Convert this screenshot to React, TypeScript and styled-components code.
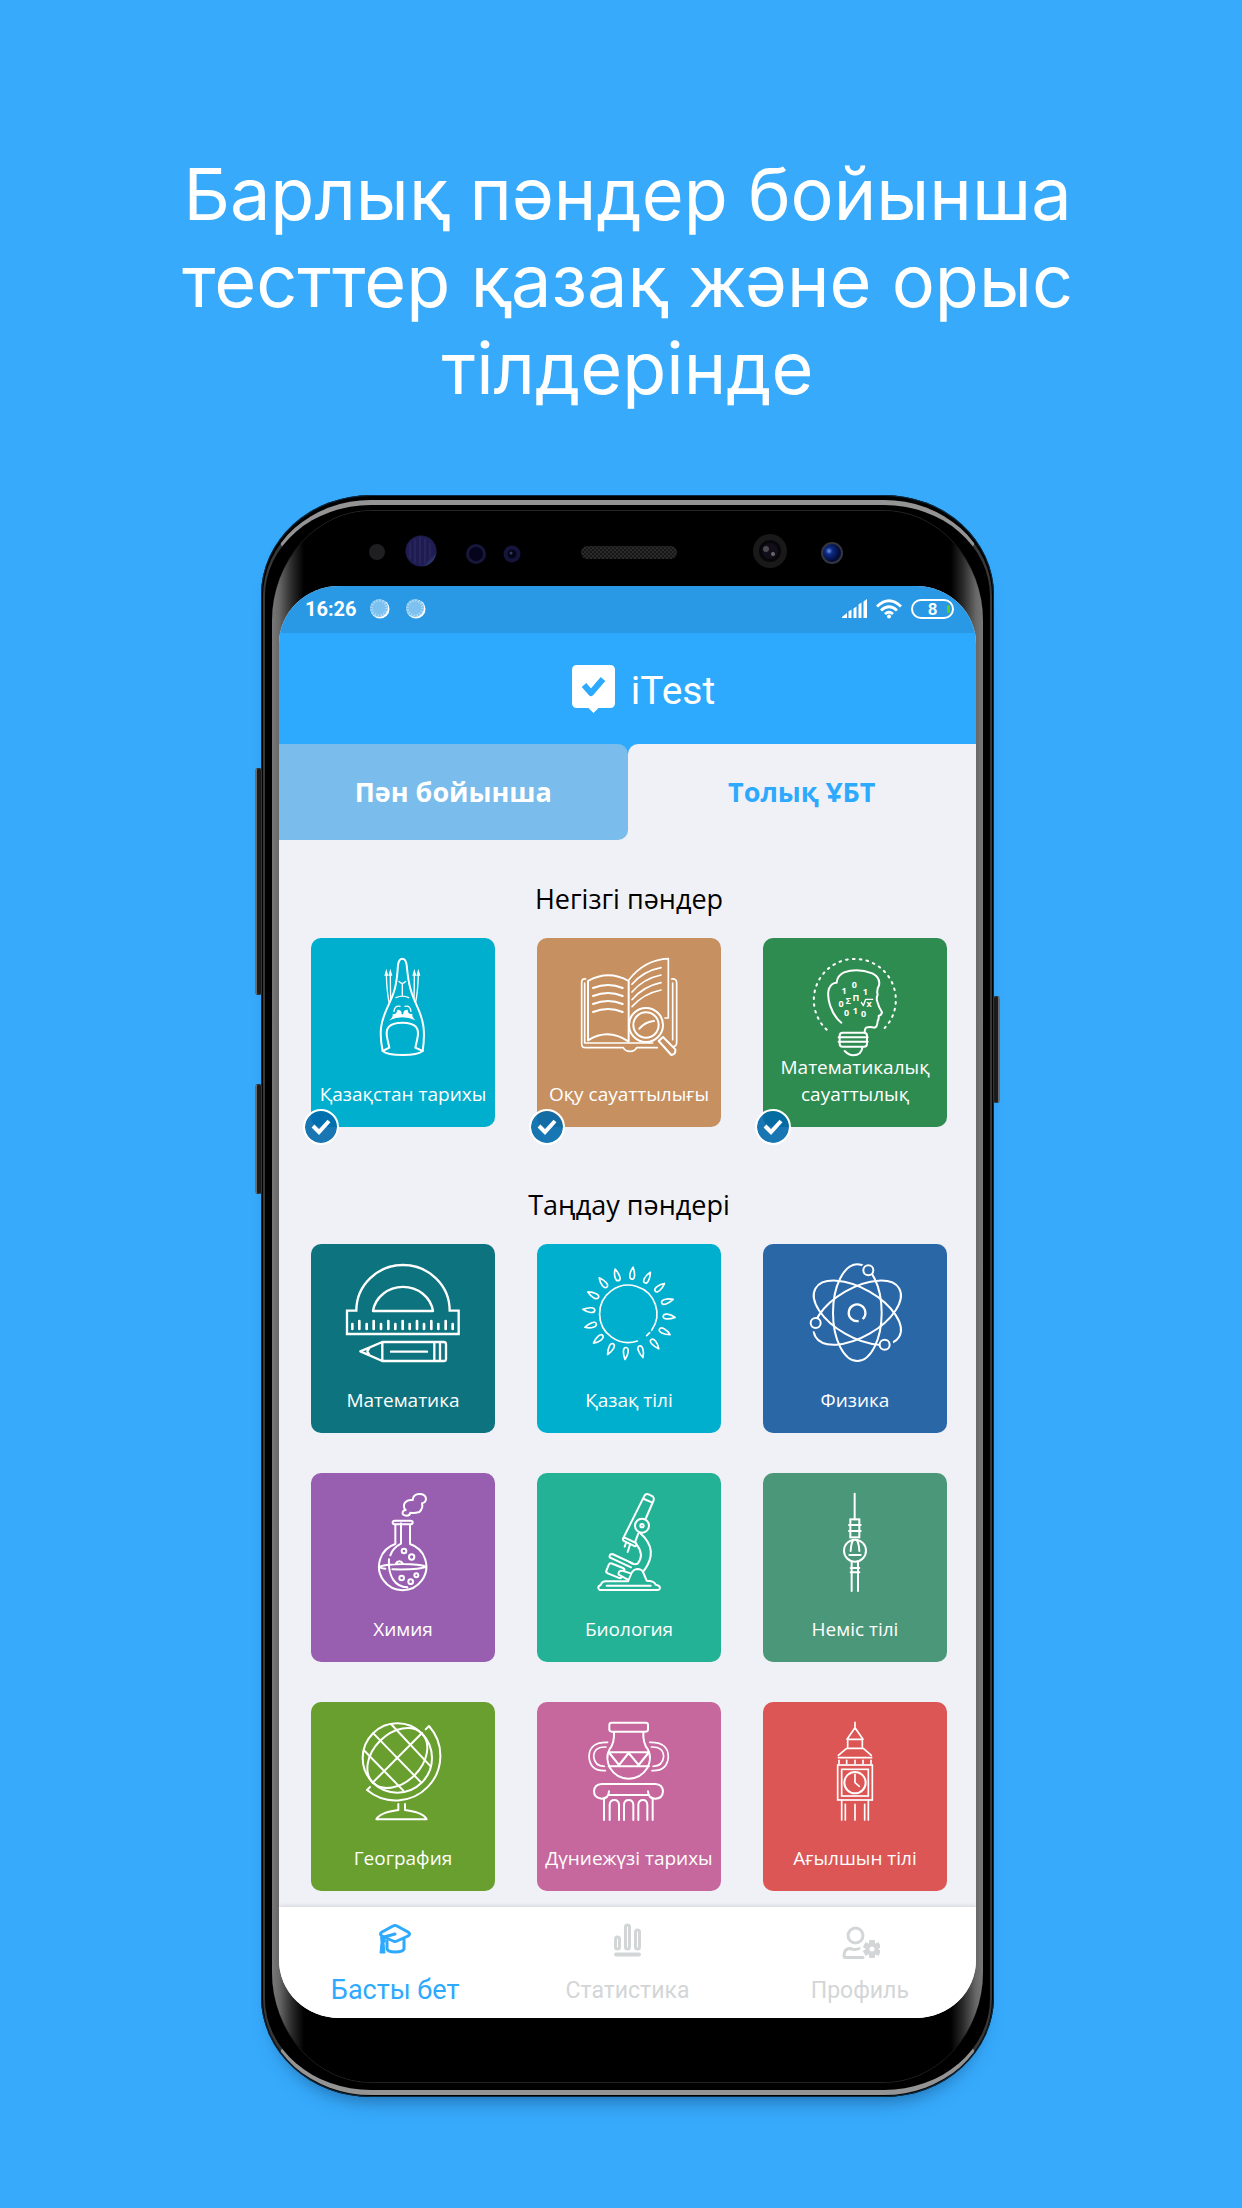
import React, { useState } from "react";
import styled, { createGlobalStyle } from "styled-components";

const GlobalStyle = createGlobalStyle`
  * { box-sizing: border-box; }
  body { margin: 0; background: #37aafc; }
  button { border: 0; padding: 0; background: none; font: inherit; color: inherit; cursor: pointer; }
  h1, h2, p { margin: 0; font-weight: 400; }
`;

const sans = `"Open Sans", "Noto Sans", sans-serif`;
const roboto = `Roboto, "Noto Sans", sans-serif`;

const Page = styled.main`
  min-height: 100vh;
  padding: 150px 0 111px 13px;
  display: flex;
  flex-direction: column;
  align-items: center;
  gap: 84px;
  background: #37aafc;
`;

const Headline = styled.p`
  max-width: 960px;
  color: #fff;
  font-family: Inter, "Noto Sans", sans-serif;
  font-size: 72px;
  line-height: 87px;
  text-align: center;
`;

/* ---------- phone body ---------- */

const Phone = styled.div`
  position: relative;
  width: min(733px, 100%);
  padding: 16px 11px 15px;
  background: #000;
  border-radius: 110px / 100px;
  box-shadow: 0 16px 20px -14px rgba(10, 50, 90, 0.6), inset 0 0 0 1px #0c2a40;

  &::before {
    content: "";
    position: absolute;
    inset: 5px 2px 2px;
    border: solid;
    border-width: 5px 2px;
    border-color: #949494 #383838;
    border-radius: 108px / 96px;
  }
`;

const SideKey = styled.span<{ $side: "left" | "right"; $top: number; $length: number }>`
  position: absolute;
  ${(p) => p.$side}: -6px;
  top: ${(p) => p.$top}px;
  width: 7px;
  height: ${(p) => p.$length}px;
  background: #1b1b1b;
  border: 1px solid #333;
  border-${(p) => p.$side}: 2px solid #6a6a6a;
  border-radius: 3px;
`;

const Glass = styled.div`
  position: relative;
  padding: 0 7px 64px;
  border-radius: 100px / 110px;
  background: linear-gradient(
    90deg,
    #787878 0,
    #686868 7px,
    #2a2a2a 20px,
    #000 32px,
    #000 calc(100% - 32px),
    #2a2a2a calc(100% - 20px),
    #686868 calc(100% - 7px),
    #787878 100%
  );
  box-shadow: 0 -1px 0 #262626, 0 1px 0 #222;
`;

const Sensors = styled.svg`
  display: block;
  width: 100%;
  height: 75px;
`;

const Screen = styled.div`
  display: flex;
  flex-direction: column;
  overflow: hidden;
  border-radius: 60px / 58px;
  background: #f0f1f6;
`;

/* ---------- app chrome ---------- */

const StatusBar = styled.div`
  display: flex;
  align-items: center;
  height: 47px;
  padding: 0 22px 1px 26px;
  background: #2999e6;
  color: #fff;
  font-family: ${roboto};
`;

const Clock = styled.time`
  margin-right: 13px;
  font-size: 20px;
  font-weight: 700;
  line-height: 24px;
`;

const Notices = styled.div`
  display: flex;
  gap: 16px;
  margin-right: auto;
`;

const Indicators = styled.div`
  display: flex;
  align-items: center;
  gap: 9px;
`;

const Battery = styled.span`
  display: flex;
  align-items: center;
  justify-content: center;
  position: relative;
  width: 43px;
  height: 20px;
  border: 2px solid #fff;
  border-radius: 10px;
  font-size: 17px;
  font-weight: 600;
  line-height: 17px;

  &::after {
    content: "";
    position: absolute;
    right: 2px;
    width: 3px;
    height: 8px;
    border-radius: 2px;
    background: #58cf1c;
  }
`;

const Header = styled.header`
  display: flex;
  align-items: center;
  justify-content: center;
  gap: 16px;
  height: 111px;
  padding-left: 32px;
  background: #2da9fe;
  color: #fff;
`;

const Brand = styled.h1`
  padding-top: 5px;
  font-family: ${roboto};
  font-size: 39px;
  line-height: 48px;
`;

const Tabs = styled.div`
  display: grid;
  grid-template-columns: 1fr 1fr;
  background: linear-gradient(#2da9fe 50%, #f0f1f6 50%);
`;

const Tab = styled.button<{ $current: boolean }>`
  height: 96px;
  border-radius: ${(p) => (p.$current ? "10px 0 0 0" : "0 10px 10px 0")};
  background: ${(p) => (p.$current ? "#f0f1f6" : "#7abcec")};
  color: ${(p) => (p.$current ? "#2da9fe" : "#fff")};
  font-family: ${sans};
  font-size: 27px;
  font-weight: 700;
  line-height: 38px;
`;

/* ---------- subjects ---------- */

const Content = styled.div`
  display: flex;
  flex-direction: column;
  gap: 59px;
  padding: 40px 29px 16px 32px;
`;

const SectionTitle = styled.h2`
  margin-bottom: 20px;
  color: #000;
  font-family: ${sans};
  font-size: 27px;
  line-height: 38px;
  text-align: center;
`;

const CardGrid = styled.div`
  display: grid;
  grid-template-columns: repeat(3, 1fr);
  gap: 40px 42px;
`;

const Card = styled.button<{ $tone: string }>`
  position: relative;
  display: flex;
  flex-direction: column;
  align-items: center;
  justify-content: space-between;
  height: 189px;
  padding: 19px 0;
  border-radius: 10px;
  background: ${(p) => p.$tone};
`;

const Drawing = styled.svg<{ $tone: string }>`
  flex: none;
  width: 120px;
  height: 96px;
  overflow: visible;
  color: ${(p) => p.$tone};
  fill: none;
  stroke: #fff;
  stroke-width: 6;
  stroke-linecap: round;
  stroke-linejoin: round;
`;

const CardLabel = styled.span`
  color: #fff;
  font-family: ${sans};
  font-size: 19px;
  line-height: 27px;
  text-align: center;
`;

const TickBadge = styled.span`
  position: absolute;
  left: -8px;
  bottom: -18px;
  display: flex;
  align-items: center;
  justify-content: center;
  width: 36px;
  height: 36px;
  border: 2px solid #fff;
  border-radius: 50%;
  background: rgba(0, 104, 172, 0.9) padding-box;
`;

/* ---------- bottom navigation ---------- */

const BottomNav = styled.nav`
  display: grid;
  grid-template-columns: repeat(3, 1fr);
  background: #fff;
  box-shadow: 0 -1px 4px rgba(0, 0, 0, 0.12);
`;

const NavItem = styled.button<{ $current: boolean }>`
  display: flex;
  flex-direction: column;
  align-items: center;
  gap: ${(p) => (p.$current ? 14 : 15)}px;
  padding: ${(p) => (p.$current ? "13px 0 12px" : "13px 0 11px")};
  color: ${(p) => (p.$current ? "#2da9fe" : "#d3d6d7")};
  font-family: ${roboto};
  font-size: ${(p) => (p.$current ? 27 : 23)}px;
  line-height: 32px;
`;

const NavIcon = styled.svg`
  width: 40px;
  height: 40px;
  fill: none;
  stroke: currentColor;
  stroke-width: 3;
  stroke-linecap: round;
  stroke-linejoin: round;
`;

/* ---------- subject drawings ---------- */

const Hat = (
  <>
    <path d="M398 962C385 900 395 870 412 832C432 790 440 770 444 704Q447 685 457 685Q467 685 470 704C476 770 484 790 503 832C520 870 527 900 518 962C500 978 415 978 398 962Z" />
    <path d="M398 962L418 952L412 925C405 895 415 877 457 877C499 877 509 895 502 925L496 952L518 962" />
    <path strokeWidth="4" d="M447 753Q457 765 467 753M457 762V795M438 802Q457 793 476 802M432 843Q434 825 450 828M483 843Q481 825 465 828" />
    <path stroke="none" fill="#fff" d="M418 870Q430 862 428 850Q440 854 442 838Q456 838 455 852H460Q459 838 473 838Q474 854 487 850Q486 862 496 870Q457 852 418 870Z" />
    <path strokeWidth="4" d="M409 730Q410 780 417 815M421 730Q421 770 422 805M505 730Q504 780 497 815M493 730Q493 770 492 805" />
    <path stroke="none" fill="#fff" d="M403 736L409 715L415 736ZM415 736L421 715L427 736ZM487 736L493 715L499 736ZM499 736L505 715L511 736Z" />
  </>
);

const Book = (
  <>
    <path d="M1014 752Q1075 718 1136 752V934Q1075 892 1014 930Z" />
    <path d="M1029 773Q1075 755 1118 773M1029 797Q1075 779 1118 797M1029 821Q1075 803 1118 821M1029 845Q1075 827 1118 845" />
    <path strokeWidth="5" d="M1007 746Q995 744 995 756V940Q995 952 1007 952H1120Q1125 963 1140 963Q1155 963 1160 952H1222M1004 758V938H1136H1208" />
    <path strokeWidth="5" d="M1137 748Q1185 688 1255 685V863H1245" />
    <path strokeWidth="5" d="M1146 762Q1180 722 1233 712M1146 785Q1180 745 1233 734M1146 808Q1180 768 1233 757M1146 829Q1180 790 1233 779" />
    <path strokeWidth="5" d="M1265 746Q1280 744 1280 758V935Q1280 948 1272 948M1268 758V928" />
    <circle cx="1188" cy="884" r="51" fill="currentColor" />
    <circle cx="1188" cy="884" r="38" />
    <path d="M1168 895Q1186 874 1212 872" />
    <path fill="currentColor" d="M1226 932L1239 920L1276 957Q1278 972 1264 974Z" />
  </>
);

const HeadBulb = (
  <>
    <path strokeDasharray="5 15.5" d="M588 898A123 123 0 1 1 762 893" />
    <path d="M632 877C600 852 587 800 595 775Q602 757 618 757Q620 735 640 726Q680 712 725 729Q750 742 745 765Q737 780 741 793Q736 805 740 814Q744 830 754 846Q752 855 744 857Q745 866 741 872Q740 892 730 892Q718 888 706 892Q702 897 702 905" />
    <rect x="627" y="907" width="82" height="42" rx="9" />
    <path d="M624 921H711M624 934H711M642 962Q655 975 668 975Q692 975 695 952" />
    <g stroke="none" fill="#fff" fontFamily="Noto Sans, sans-serif" fontWeight="700" fontSize="27" textAnchor="middle">
      <text x="640" y="790">1</text>
      <text x="671" y="774">0</text>
      <text x="704" y="794">1</text>
      <text x="631" y="829">0</text>
      <text x="653" y="822">Σ</text>
      <text x="676" y="811">Π</text>
      <text x="715" y="830">x</text>
      <text x="648" y="856">0</text>
      <text x="674" y="850">1</text>
      <text x="699" y="860">0</text>
    </g>
    <path strokeWidth="4" d="M692 816L698 826L705 807H726" />
  </>
);

const ticks = [187, 208, 230, 251, 273, 295, 316, 338, 359, 381, 402, 424, 445, 467, 488];

const Ruler = (
  <>
    <path strokeWidth="7" d="M171 393H199A140 137 0 0 1 479 393H506V463H171Z" strokeLinejoin="miter" />
    <path strokeWidth="7" d="M249 394A91 85 0 0 1 429 394Z" />
    <path strokeWidth="8" d={ticks.map((x, i) => `M${x} ${i % 2 ? 424 : 433}V448`).join("")} />
    <path strokeWidth="7" d="M211 515L277 487H461Q468 487 468 494V537Q468 544 461 544H277ZM277 487V544M433 487V544M450 487V544M303 516H411M238 505L232 515L238 526" />
  </>
);

const Sun = (
  <>
    <path strokeWidth="5" d="M1042 484A86 86 0 1 1 1085 452M1070 468L1079 459" />
    <g transform="translate(1017 401)">
      {Array.from({ length: 16 }, (_, i) => (
        <path key={i} strokeWidth="5" transform={`rotate(${5 + i * 22.5})`} d="M139 0C122-10 103-10 103 0C103 10 122 8 139 0Z" />
      ))}
    </g>
  </>
);

const Atom = (
  <>
    <ellipse cx="680" cy="399" rx="73" ry="145" />
    <ellipse cx="680" cy="399" rx="73" ry="145" transform="rotate(60 680 399)" />
    <ellipse cx="680" cy="399" rx="73" ry="145" transform="rotate(-60 680 399)" />
    <g stroke="none" fill="currentColor">
      <circle cx="706" cy="269" r="16" />
      <circle cx="554" cy="438" r="18" />
      <circle cx="770" cy="492" r="18" />
    </g>
    <g fill="currentColor">
      <circle cx="713" cy="272" r="15" />
      <circle cx="555" cy="430" r="15" />
      <circle cx="762" cy="495" r="15" />
    </g>
    <path strokeWidth="7" strokeLinecap="butt" d="M684 424A25 25 0 1 1 696 418" />
  </>
);

const Flask = (
  <>
    <path d="M350 197Q336 197 338 187Q340 180 347 180Q337 170 345 158Q353 148 368 150Q370 132 388 132Q407 132 408 147Q407 158 396 160Q400 175 388 186Q373 190 361 188Q360 197 350 197Z" />
    <rect x="308" y="212" width="60" height="11" rx="6" />
    <path d="M316 225V282A71 71 0 1 0 360 282V225M333 220V281Q308 294 301 316M297 328C294 380 315 410 352 412" />
    <path d="M286 356Q270 354 269 350Q290 342 338 342Q390 342 408 350Q390 360 307 358M318 340A11 11 0 0 1 338 340" />
    <circle cx="342" cy="303" r="7" />
    <circle cx="365" cy="321" r="8" />
    <circle cx="335" cy="384" r="7" />
    <circle cx="379" cy="376" r="6" />
    <circle cx="362" cy="395" r="7" />
  </>
);

const Microscope = (
  <>
    <path d="M929 420Q919 411 932 405Q936 394 947 394H1014L1024 370Q1030 358 1042 357Q1055 357 1059 366L1070 392Q1093 392 1097 404Q1113 407 1109 417Q1107 420 1103 420Z" />
    <path d="M950 407H1082" />
    <path d="M1051 250Q1108 300 1062 362M1040 284Q1064 315 1043 341Q1030 346 1018 336" />
    <path d="M1062 140Q1067 129 1076 133L1088 139Q1094 146 1090 153L1068 204M1062 140L1000 264M1062 147L1087 158M1045 250L1036 274" />
    <circle cx="1056" cy="227" r="21" />
    <circle cx="1056" cy="227" r="5" />
    <path d="M1004 263L1038 279Q1042 286 1035 289L1000 272Q996 264 1004 263ZM1008 279L1004 290M1020 284L1013 306" />
    <path d="M967 312L1028 340M959 322L1023 352M967 312Q957 312 959 322" />
    <rect x="951" y="346" width="50" height="32" rx="7" transform="rotate(22 976 362)" />
    <path fill="currentColor" d="M1022 370L996 362Q984 362 986 374L1012 388" />
  </>
);

const TvTower = (
  <>
    <path d="M672 131V208M655 225H690M655 243H690" />
    <rect x="659" y="208" width="27" height="54" strokeLinejoin="miter" />
    <circle cx="673" cy="302" r="33" />
    <path d="M660 303Q661 282 667 271M686 303Q685 282 679 271M656 315H690M663 337V423M682 337V423M660 354H686M660 367H686" />
  </>
);

const Globe = (
  <>
    <circle cx="322" cy="205" r="104" />
    <ellipse cx="322" cy="205" rx="104" ry="73" transform="rotate(-45 322 205)" />
    <path d="M250 131L393 278M303 103L422 230M224 184L340 303M396 130L248 279" />
    <path d="M407 119L417 109A134 134 0 0 1 231 301L240 292" />
    <path d="M325 343V361Q270 368 259 389H410Q400 368 345 361V343" />
  </>
);

const handle = "M953 158Q898 156 897 201Q900 245 946 243M948 172Q912 170 911 201Q914 230 943 230";

const Vase = (
  <>
    <rect x="958" y="99" width="116" height="27" rx="7" />
    <path d="M972 127Q974 160 958 180Q945 205 960 235Q980 267 1016 267Q1052 267 1072 235Q1087 205 1074 180Q1058 160 1060 127" />
    <path d="M956 188H1077M956 230H1077M958 190L987 226L1016 190L1046 226L1075 190" />
    <path strokeWidth="5" d={handle} />
    <path strokeWidth="5" d={handle} transform="translate(2032 0) scale(-1 1)" />
    <path d="M957 305Q956 326 935 327Q912 325 912 305Q913 284 935 283H1096Q1118 284 1119 305Q1118 326 1096 327Q1075 326 1074 305M958 316H1072" />
    <path d="M942 328V391M1088 328V391M959 391V345Q960 331 973 331Q986 331 987 345V391M1002 391V345Q1003 331 1016 331Q1029 331 1030 345V391M1045 391V345Q1046 331 1059 331Q1071 331 1072 345V391" />
  </>
);

const ClockTower = (
  <>
    <path strokeWidth="5" d="M673 98V112M673 114L697 149H649ZM651 153V171M695 153V171M648 176H698L722 197M648 176L623 197M623 204H723M625 212V222M648 212V222M673 212V222M697 212V222M721 212V222" />
    <g strokeLinejoin="miter" strokeWidth="5">
      <rect x="621" y="226" width="104" height="105" />
      <rect x="633" y="239" width="80" height="80" />
    </g>
    <circle cx="673" cy="279" r="32" />
    <path strokeWidth="5" d="M673 254V279L686 290M633 333V391M644 344V391M673 344V391M702 344V391M713 333V391" />
  </>
);

type Subject = { name: string; tone: string; view: string; art: React.ReactNode };

const mainSubjects: Subject[] = [
  { name: "Қазақстан тарихы", tone: "#00afcd", view: "279 680 360 288", art: Hat },
  { name: "Оқу сауаттылығы", tone: "#c69061", view: "957 680 360 288", art: Book },
  { name: "Математикалық сауаттылық", tone: "#2f8c51", view: "493 680 360 288", art: HeadBulb },
];

const electiveSubjects: Subject[] = [
  { name: "Математика", tone: "#0d737e", view: "159 250 360 288", art: Ruler },
  { name: "Қазақ тілі", tone: "#00afcd", view: "837 250 360 288", art: Sun },
  { name: "Физика", tone: "#2967a6", view: "493 250 360 288", art: Atom },
  { name: "Химия", tone: "#985fb0", view: "159 126 360 288", art: Flask },
  { name: "Биология", tone: "#24b297", view: "837 126 360 288", art: Microscope },
  { name: "Неміс тілі", tone: "#4b9779", view: "493 126 360 288", art: TvTower },
  { name: "География", tone: "#689f2e", view: "159 94 360 288", art: Globe },
  { name: "Дүниежүзі тарихы", tone: "#c6679d", view: "837 94 360 288", art: Vase },
  { name: "Ағылшын тілі", tone: "#db5654", view: "493 94 360 288", art: ClockTower },
];

function SubjectCard({ subject, chosen = false }: { subject: Subject; chosen?: boolean }) {
  return (
    <Card type="button" $tone={subject.tone} aria-pressed={chosen}>
      <Drawing $tone={subject.tone} viewBox={subject.view} aria-hidden="true">
        {subject.art}
      </Drawing>
      <CardLabel>{subject.name}</CardLabel>
      {chosen && (
        <TickBadge>
          <svg width="20" height="16" viewBox="0 0 20 16" fill="none" stroke="#fff" strokeWidth="4" aria-hidden="true">
            <path d="M2 7L8 13L18 2" />
          </svg>
        </TickBadge>
      )}
    </Card>
  );
}

/* ---------- small icons ---------- */

function Spinner() {
  return (
    <svg width="20" height="22" viewBox="0 0 20 22" aria-hidden="true">
      <circle cx="10" cy="11" r="9.5" fill="#fff" />
      <circle cx="9" cy="10" r="9" fill="#7cc1f0" />
      <circle cx="9" cy="10" r="7.5" fill="none" stroke="#b5dcf7" strokeWidth="2.5" strokeDasharray="1.2 1.75" />
    </svg>
  );
}

const Signal = () => (
  <svg width="25" height="20" viewBox="0 0 25 20" fill="#fff" aria-hidden="true">
    <path d="M0 19V18L5 14V19ZM6.5 12.5L9.5 10.5V19H6.5ZM11.5 9.5L14.5 7.5V19H11.5ZM16.5 5.5L19.5 3.5V19H16.5ZM21.5 2.5L25 0V19H21.5Z" />
  </svg>
);

const Wifi = () => (
  <svg width="26" height="20" viewBox="0 0 26 20" fill="none" stroke="#fff" strokeWidth="2.8" aria-hidden="true">
    <path d="M1 7.5Q13-4 25 7.5M5 11.5Q13 4 21 11.5M9 15Q13 11.5 17 15" />
    <circle cx="13" cy="17.5" r="2" fill="#fff" stroke="none" />
  </svg>
);

const Logo = () => (
  <svg width="43" height="48" viewBox="0 0 43 48" aria-hidden="true">
    <path fill="#fff" d="M5 0H38Q43 0 43 5V38Q43 43 38 43H26.5L21.5 48L16.5 43H5Q0 43 0 38V5Q0 0 5 0Z" />
    <path fill="none" stroke="#2da9fe" strokeWidth="6" strokeLinejoin="round" d="M12 20L19 28L31 14" />
  </svg>
);

const gearTeeth = [0, 60, 120, 180, 240, 300];

const navItems = [
  {
    name: "Басты бет",
    icon: (
      <>
        <path d="M18 6Q20 5 22 6L33 12Q36 14 33 16L22 21Q20 22 18 21L7 16Q4 14 7 12Z" />
        <path d="M20 14L9 17V21M12 21V29Q13 32 20 32Q28 32 29 29V19" />
        <path fill="currentColor" strokeWidth="1" d="M6 17H9V23L10 33H5L6 23Z" />
      </>
    ),
  },
  {
    name: "Статистика",
    icon: (
      <>
        <g strokeWidth="3">
          <rect x="8.5" y="17" width="4" height="12" rx="2" />
          <rect x="18.5" y="5" width="4" height="24" rx="2" />
          <rect x="28.5" y="10" width="4" height="19" rx="2" />
        </g>
        <path strokeWidth="4" d="M9 34.5H32" />
      </>
    ),
  },
  {
    name: "Профиль",
    icon: (
      <>
        <circle cx="15.5" cy="15.5" r="7.5" />
        <path d="M23 37.5H5Q4 37.5 4 36Q4 28.5 10 28.5Q15 30.5 19 28.5" />
        <circle cx="32" cy="29" r="4.5" strokeWidth="4" />
        <g fill="currentColor" stroke="none">
          {gearTeeth.map((a) => (
            <rect key={a} x="29" y="20" width="6" height="5" rx="1" transform={`rotate(${a} 32 29)`} />
          ))}
        </g>
      </>
    ),
  },
];

const PhoneSensors = () => (
  <Sensors viewBox="7 0 697 75" aria-hidden="true">
    <defs>
      <pattern id="mesh" width="4" height="4" patternUnits="userSpaceOnUse">
        <rect width="4" height="4" fill="#161616" />
        <rect width="2" height="2" fill="#2b2b2b" />
        <rect x="2" y="2" width="2" height="2" fill="#2b2b2b" />
      </pattern>
      <linearGradient id="iris" x1="0" y1="0" x2="1" y2="1">
        <stop offset="0.75" stopColor="#1e1c50" />
        <stop offset="1" stopColor="#4a6db0" />
      </linearGradient>
      <radialGradient id="lens" cx="0.35" cy="0.4">
        <stop offset="0" stopColor="#6f93e0" />
        <stop offset="0.35" stopColor="#0d2a86" />
        <stop offset="1" stopColor="#040d3a" />
      </radialGradient>
    </defs>
    <circle cx="105" cy="41" r="8" fill="#1f1e20" />
    <circle cx="149" cy="40" r="15.5" fill="url(#iris)" />
    <path d="M138 32V48M143 28V52M148 26V54M153 28V52M158 32V48" stroke="#2b2860" strokeWidth="1.5" />
    <circle cx="204" cy="43" r="8.5" fill="#04041c" stroke="#17173a" strokeWidth="3" />
    <circle cx="240" cy="43" r="6.5" fill="#05051a" stroke="#15153c" strokeWidth="4" />
    <circle cx="239" cy="42" r="1.5" fill="#3a3a5c" />
    <rect x="309" y="35" width="96" height="13" rx="6" fill="url(#mesh)" />
    <circle cx="498" cy="40" r="14" fill="#07070a" stroke="#191919" strokeWidth="6" />
    <circle cx="498" cy="40" r="8" fill="#120e1a" />
    <circle cx="494" cy="38" r="3" fill="#4c4a50" />
    <circle cx="501" cy="43" r="2" fill="#6b6870" />
    <circle cx="560" cy="42" r="10" fill="url(#lens)" stroke="#34363d" strokeWidth="2" />
  </Sensors>
);

export default function App() {
  const [tab, setTab] = useState(1);
  const [page, setPage] = useState(0);

  return (
    <>
      <GlobalStyle />
      <Page>
        <Headline>Барлық пәндер бойынша тесттер қазақ және орыс тілдерінде</Headline>
        <Phone>
          <SideKey $side="left" $top={273} $length={227} />
          <SideKey $side="left" $top={589} $length={110} />
          <SideKey $side="right" $top={501} $length={107} />
          <Glass>
            <PhoneSensors />
            <Screen>
              <StatusBar>
                <Clock>16:26</Clock>
                <Notices>
                  <Spinner />
                  <Spinner />
                </Notices>
                <Indicators>
                  <Signal />
                  <Wifi />
                  <Battery>8</Battery>
                </Indicators>
              </StatusBar>
              <Header>
                <Logo />
                <Brand>iTest</Brand>
              </Header>
              <Tabs role="tablist">
                {["Пән бойынша", "Толық ҰБТ"].map((name, i) => (
                  <Tab key={name} type="button" role="tab" aria-selected={tab === i} $current={tab === i} onClick={() => setTab(i)}>
                    {name}
                  </Tab>
                ))}
              </Tabs>
              <Content>
                <section>
                  <SectionTitle>Негізгі пәндер</SectionTitle>
                  <CardGrid>
                    {mainSubjects.map((s) => (
                      <SubjectCard key={s.name} subject={s} chosen />
                    ))}
                  </CardGrid>
                </section>
                <section>
                  <SectionTitle>Таңдау пәндері</SectionTitle>
                  <CardGrid>
                    {electiveSubjects.map((s) => (
                      <SubjectCard key={s.name} subject={s} />
                    ))}
                  </CardGrid>
                </section>
              </Content>
              <BottomNav>
                {navItems.map((item, i) => (
                  <NavItem key={item.name} type="button" $current={page === i} onClick={() => setPage(i)}>
                    <NavIcon viewBox="0 0 40 40" aria-hidden="true">
                      {item.icon}
                    </NavIcon>
                    {item.name}
                  </NavItem>
                ))}
              </BottomNav>
            </Screen>
          </Glass>
        </Phone>
      </Page>
    </>
  );
}
